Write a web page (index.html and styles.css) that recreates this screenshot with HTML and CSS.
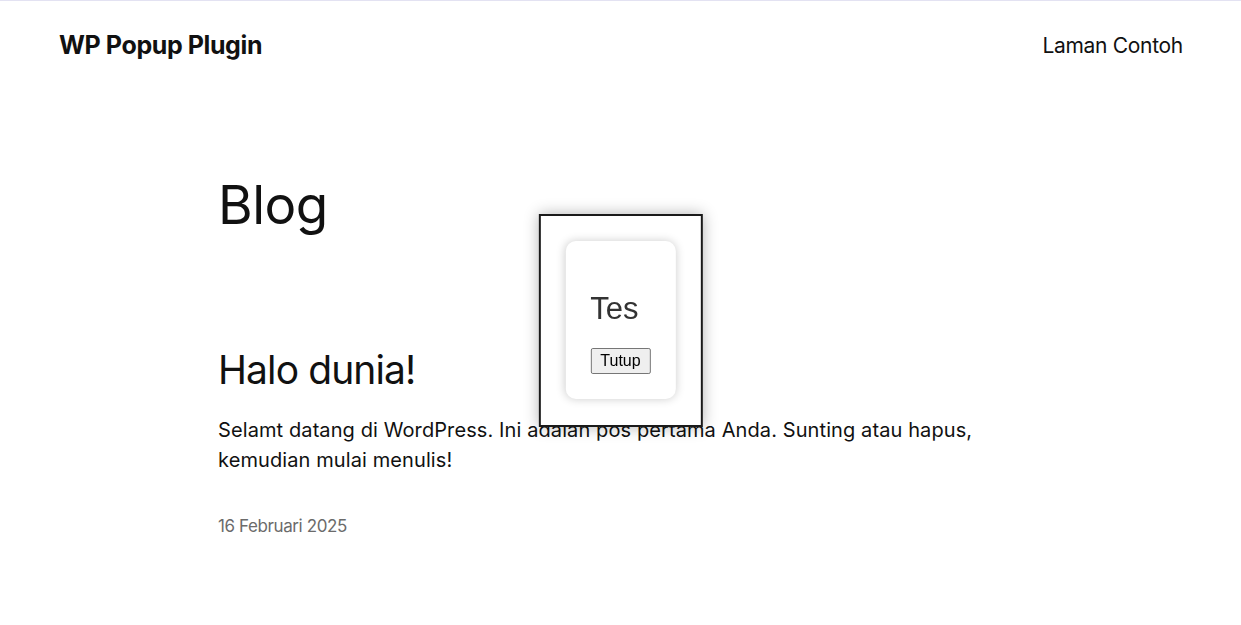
FILE: index.html
```html
<!DOCTYPE html>
<html lang="id">
<head>
<meta charset="utf-8">
<title>Blog – WP Popup Plugin</title>
<link rel="stylesheet" href="styles.css">
</head>
<body>
<header class="site-header">
  <div class="site-title">WP Popup Plugin</div>
  <nav class="site-nav">Laman Contoh</nav>
</header>
<main class="content">
  <h1 class="page-title">Blog</h1>
  <article class="post">
    <h2 class="post-title">Halo dunia!</h2>
    <p class="post-excerpt">Selamt datang di WordPress. Ini adalan pos pertama Anda. Sunting atau hapus, kemudian mulai menulis!</p>
    <div class="post-date">16 Februari 2025</div>
  </article>
</main>
<div class="popup">
  <div class="popup-card">
    <h2 class="popup-title">Tes</h2>
    <button class="popup-btn" type="button">Tutup</button>
  </div>
</div>
</body>
</html>
```
FILE: styles.css
```css
html, body { margin: 0; padding: 0; }
body {
  font-family: Inter, "Noto Sans", sans-serif;
  color: #111;
  background: #fff;
  border-top: 1px solid #e3e2f2;
  min-height: 624px;
}
.site-header {
  display: flex;
  justify-content: space-between;
  align-items: center;
  height: 88px;
  padding: 0 58px 0 59px;
}
.site-title {
  font-weight: 700;
  font-size: 25px;
  letter-spacing: -0.4px;
}
.site-nav {
  font-size: 21px;
  font-weight: 400;
  letter-spacing: -0.3px;
}
.content {
  width: 805px;
  margin: 0 auto;
  padding-top: 85px;
}
.page-title {
  font-size: 53px;
  font-weight: 400;
  line-height: 1.2;
  margin: 0 0 109px;
  letter-spacing: -0.5px;
}
.post-title {
  font-size: 39px;
  font-weight: 400;
  line-height: 1.2;
  margin: 0 0 22px;
  letter-spacing: -0.9px;
}
.post-excerpt {
  font-size: 20px;
  line-height: 30px;
  margin: 0 0 41px;
  letter-spacing: 0.1px;
}
.post-date {
  font-size: 17px;
  color: #6b6b6b;
  letter-spacing: -0.4px;
}
.popup {
  position: fixed;
  top: 214px;
  left: 50%;
  transform: translateX(-50%);
  border: 2px solid #1a1a1a;
  background: #fff;
  padding: 25px 25px 26px;
  box-shadow: 0 0 14px rgba(0,0,0,0.3);
}
.popup-card {
  background: #fff;
  border-radius: 10px;
  padding: 25px;
  box-shadow: 0 0 10px rgba(0,0,0,0.2);
  font-family: "Liberation Sans", Arial, sans-serif;
}
.popup-title {
  font-size: 31px;
  font-weight: 400;
  color: #333;
  line-height: 34px;
  margin: 26px 0 22px;
}
.popup-btn {
  font-family: "Liberation Sans", Arial, sans-serif;
  font-size: 16px;
  line-height: 18px;
  padding: 3px 9px;
  color: #000;
  background: #efefef;
  border: 1px solid #767676;
  border-radius: 2px;
  display: block;
}
```
